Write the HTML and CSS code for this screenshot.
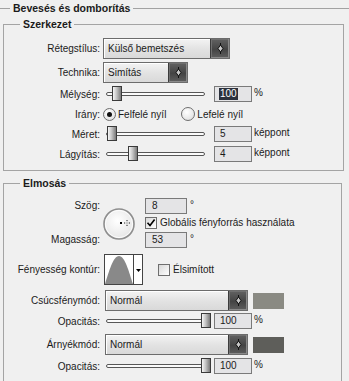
FILE: index.html
```html
<!DOCTYPE html>
<html lang="hu">
<head>
<meta charset="utf-8">
<title>Bevesés és domborítás</title>
<link rel="stylesheet" href="styles.css">
</head>
<body>
<main class="panel">
  <header class="title-row">
    <span class="rule rule-lead"></span>
    <h2 class="title">Bevesés és domborítás</h2>
    <span class="rule"></span>
  </header>

  <section class="group group-struct">
    <h3 class="legend">Szerkezet</h3>

    <div class="row h21 mt7">
      <span class="label">Rétegstílus:</span>
      <div class="select sel-style">
        <span class="select-text">Külső bemetszés</span>
        <span class="select-btn"><svg width="7" height="11" viewBox="0 0 7 11"><path d="M3.5 0V2M3.5 9V11" stroke="#111" stroke-width="1"/><path d="M3.5 2L6 5.5L3.5 9L1 5.5Z" fill="#c9c9c9" stroke="#111" stroke-width="1"/></svg></span>
      </div>
    </div>

    <div class="row h21 mt3">
      <span class="label">Technika:</span>
      <div class="select sel-tech">
        <span class="select-text">Simítás</span>
        <span class="select-btn"><svg width="7" height="11" viewBox="0 0 7 11"><path d="M3.5 0V2M3.5 9V11" stroke="#111" stroke-width="1"/><path d="M3.5 2L6 5.5L3.5 9L1 5.5Z" fill="#c9c9c9" stroke="#111" stroke-width="1"/></svg></span>
      </div>
    </div>

    <div class="row h16 mt3">
      <span class="label">Mélység:</span>
      <div class="slider"><span class="track"></span><span class="thumb" style="left:6px"></span></div>
      <div class="field w38"><span class="selected">100</span></div>
      <span class="unit">%</span>
    </div>

    <div class="row h16 mt4">
      <span class="label">Irány:</span>
      <span class="radio radio-first checked"></span><span class="opt">Felfelé nyíl</span>
      <span class="radio radio-second"></span><span class="opt">Lefelé nyíl</span>
    </div>

    <div class="row h16 mt4">
      <span class="label">Méret:</span>
      <div class="slider"><span class="track"></span><span class="thumb" style="left:1px"></span></div>
      <div class="field w38">5</div>
      <span class="unit">képpont</span>
    </div>

    <div class="row h16 mt4">
      <span class="label">Lágyítás:</span>
      <div class="slider"><span class="track"></span><span class="thumb" style="left:22px"></span></div>
      <div class="field w38">4</div>
      <span class="unit">képpont</span>
    </div>
  </section>

  <section class="group group-shade">
    <h3 class="legend">Elmosás</h3>

    <div class="row angle-block mt8">
      <div class="angle-labels"><span>Szög:</span><span>Magasság:</span></div>
      <div class="dial">
        <svg width="32" height="32" viewBox="0 0 32 32">
          <defs>
            <radialGradient id="dialFill" cx="45%" cy="40%" r="65%">
              <stop offset="0" stop-color="#ffffff"/>
              <stop offset="1" stop-color="#e4e4e4"/>
            </radialGradient>
          </defs>
          <circle cx="16" cy="16" r="15" fill="url(#dialFill)" stroke="#8e8e8e" stroke-width="1.6"/>
          <circle cx="16" cy="16" r="13.6" fill="none" stroke="#ffffff" stroke-width="0.8"/>
          <rect x="17" y="14" width="2" height="2" fill="#000"/>
          <path d="M21 15H22.2M23.6 15H24.4M25.8 15H27M24 12V13.2M24 16.8V18" stroke="#222" stroke-width="1"/>
        </svg>
      </div>
      <div class="angle-fields">
        <div class="fline"><div class="field w42">8</div><span class="unit deg">°</span></div>
        <div class="check-line">
          <span class="check"><svg width="10" height="10" viewBox="0 0 10 10"><path d="M1.5 4.8L4 7.6L8.6 1.4" fill="none" stroke="#000" stroke-width="1.6"/></svg></span>
          <span class="check-text">Globális fényforrás használata</span>
        </div>
        <div class="fline"><div class="field w42">53</div><span class="unit deg">°</span></div>
      </div>
    </div>

    <div class="row h31 mt6">
      <span class="label">Fényesség kontúr:</span>
      <div class="contour">
        <span class="contour-preview"><svg width="28" height="29" viewBox="0 0 28 29"><path d="M0 29C4 17 8 1 14 1C20 1 24 17 28 29Z" fill="#898989"/></svg></span>
        <span class="contour-arrow"><svg width="5" height="3" viewBox="0 0 5 3"><path d="M0 0H5L2.5 3Z" fill="#000"/></svg></span>
      </div>
      <span class="check check-aa"></span>
      <span class="check-text">Élsimított</span>
    </div>

    <div class="row h21 mt5">
      <span class="label">Csúcsfénymód:</span>
      <div class="select sel-mode">
        <span class="select-text">Normál</span>
        <span class="select-btn"><svg width="7" height="11" viewBox="0 0 7 11"><path d="M3.5 0V2M3.5 9V11" stroke="#111" stroke-width="1"/><path d="M3.5 2L6 5.5L3.5 9L1 5.5Z" fill="#c9c9c9" stroke="#111" stroke-width="1"/></svg></span>
      </div>
      <span class="swatch swatch-hi"></span>
    </div>

    <div class="row h16 mt2">
      <span class="label">Opacitás:</span>
      <div class="slider"><span class="track"></span><span class="thumb" style="left:95px"></span></div>
      <div class="field w38">100</div>
      <span class="unit">%</span>
    </div>

    <div class="row h21 mt5">
      <span class="label">Árnyékmód:</span>
      <div class="select sel-mode">
        <span class="select-text">Normál</span>
        <span class="select-btn"><svg width="7" height="11" viewBox="0 0 7 11"><path d="M3.5 0V2M3.5 9V11" stroke="#111" stroke-width="1"/><path d="M3.5 2L6 5.5L3.5 9L1 5.5Z" fill="#c9c9c9" stroke="#111" stroke-width="1"/></svg></span>
      </div>
      <span class="swatch swatch-lo"></span>
    </div>

    <div class="row h16 mt3">
      <span class="label">Opacitás:</span>
      <div class="slider"><span class="track"></span><span class="thumb" style="left:95px"></span></div>
      <div class="field w38">100</div>
      <span class="unit">%</span>
    </div>
  </section>
</main>
</body>
</html>
```

FILE: styles.css
```css
* { box-sizing: border-box; }

html, body {
  margin: 0;
  padding: 0;
}

body {
  width: 349px;
  height: 381px;
  overflow: hidden;
  background: #f0f0f0;
  color: #1b1b1b;
  font-family: "Liberation Sans", Arial, sans-serif;
  font-size: 10px;
}

.panel {
  display: flex;
  flex-direction: column;
}

/* top title */
.title-row {
  display: flex;
  align-items: center;
  height: 16px;
}
.rule {
  flex: 1;
  height: 1px;
  background: #a2a2a2;
}
.rule-lead { flex: 0 0 10px; }
.title {
  margin: 0;
  padding: 0 3px;
  font-size: 10.5px;
  font-weight: bold;
  line-height: 13px;
}

/* group boxes */
.group {
  display: flex;
  flex-direction: column;
  margin-left: 3px;
  border: 1px solid #a4a4a4;
}
.group-struct {
  margin-top: 8px;
  width: 341px;
  padding-bottom: 8px;
}
.group-shade {
  margin-top: 12px;
  width: 339px;
  padding-bottom: 12px;
}
.legend {
  align-self: flex-start;
  margin: -7px 0 0 16px;
  padding: 0 3px;
  height: 13px;
  background: #f0f0f0;
  font-size: 10.5px;
  font-weight: bold;
  line-height: 13px;
}

/* rows */
.row {
  display: flex;
  align-items: center;
  flex: none;
}
.h16 { height: 16px; }
.h21 { height: 21px; }
.h31 { height: 31px; }
.mt2 { margin-top: 2px; }
.mt3 { margin-top: 3px; }
.mt4 { margin-top: 4px; }
.mt5 { margin-top: 5px; }
.mt6 { margin-top: 6px; }
.mt7 { margin-top: 7px; }
.mt8 { margin-top: 8px; }

.label {
  flex: none;
  width: 96px;
  text-align: right;
  white-space: nowrap;
}

/* select */
.select {
  display: flex;
  height: 21px;
  border: 1px solid #6c6c6c;
  background: linear-gradient(#f3f3f3, #e2e2e2 55%, #d9d9d9);
  box-shadow: inset 1px 1px 0 #ffffff;
}
.sel-style { margin-left: 3px; width: 127px; }
.sel-tech { margin-left: 3px; width: 85px; }
.sel-mode { margin-left: 5px; width: 143px; }
.select-text {
  flex: 1;
  display: flex;
  align-items: center;
  padding-left: 4px;
  white-space: nowrap;
}
.select-btn {
  flex: none;
  width: 19px;
  display: flex;
  align-items: center;
  justify-content: center;
  border-left: 1px solid #3c3c3c;
  background: linear-gradient(#626262, #444444 55%, #5e5e5e);
  box-shadow: inset -1px -1px 0 #8a8a8a, inset 1px 1px 0 #707070;
}

/* slider */
.slider {
  position: relative;
  flex: none;
  width: 104px;
  height: 16px;
  margin-left: 6px;
  display: flex;
  align-items: center;
}
.track {
  width: 99px;
  height: 4px;
  border: 1px solid #575757;
  border-radius: 2px;
  background: #fbfbfb;
}
.thumb {
  position: absolute;
  top: 0;
  width: 10px;
  height: 15px;
  border: 1px solid #3a3a3a;
  background: linear-gradient(to right, #f6f6f6, #c4c4c4 45%, #7a7a7a);
}

/* text fields */
.field {
  flex: none;
  height: 16px;
  display: flex;
  align-items: center;
  padding-left: 5px;
  border: 1px solid #7a7a7a;
  background: #e4e4e6;
  line-height: 12px;
}
.w38 { width: 38px; margin-left: 4px; }
.w42 { width: 42px; padding-left: 6px; }
.selected {
  margin-left: -1px;
  padding: 0 1px;
  background: #2c313c;
  color: #ffffff;
  line-height: 12px;
}
.unit {
  align-self: flex-start;
  margin-left: 2px;
  line-height: 13px;
}
.deg { margin-left: 3px; }

/* radios */
.radio {
  flex: none;
  width: 13px;
  height: 13px;
  display: flex;
  align-items: center;
  justify-content: center;
  border: 1px solid #6e6e6e;
  border-radius: 50%;
  background: radial-gradient(circle at 40% 35%, #ffffff, #dadada);
}
.radio.checked::after {
  content: "";
  width: 5px;
  height: 5px;
  border-radius: 50%;
  background: #111;
}
.radio-first { margin-left: 3px; }
.radio-second { margin-left: 15px; width: 14px; height: 14px; }
.opt {
  margin-left: 2px;
  white-space: nowrap;
}

/* angle block */
.angle-block {
  height: 50px;
  align-items: flex-start;
}
.angle-labels {
  flex: none;
  width: 96px;
  height: 50px;
  display: flex;
  flex-direction: column;
  justify-content: space-between;
  align-items: flex-end;
  line-height: 16px;
}
.dial {
  flex: none;
  width: 32px;
  height: 32px;
  margin: 10px 0 0 3px;
  display: flex;
}
.angle-fields {
  display: flex;
  flex-direction: column;
  margin-left: 10px;
}
.fline {
  display: flex;
  height: 16px;
}
.check-line {
  display: flex;
  align-items: center;
  height: 12px;
  margin: 3px 0;
}
.check {
  flex: none;
  width: 12px;
  height: 12px;
  display: flex;
  align-items: center;
  justify-content: center;
  border: 1px solid #6e6e6e;
  background: linear-gradient(135deg, #d8d8d8, #ffffff);
}
.check-text {
  margin-left: 3px;
  white-space: nowrap;
  line-height: 12px;
}
.check-aa { margin-left: 15px; }

/* contour */
.contour {
  flex: none;
  display: flex;
  width: 39px;
  height: 31px;
  margin-left: 4px;
  border: 1px solid #444444;
  background: #ffffff;
}
.contour-preview {
  display: flex;
  align-items: flex-end;
  width: 28px;
}
.contour-arrow {
  flex: 1;
  display: flex;
  align-items: center;
  justify-content: center;
  border-left: 1px solid #444444;
  padding-top: 2px;
}

/* colour swatches */
.swatch {
  flex: none;
  width: 31px;
  height: 16px;
  margin-left: 5px;
}
.swatch-hi { background: #8a8a83; }
.swatch-lo { background: #5e5e5a; }
```
